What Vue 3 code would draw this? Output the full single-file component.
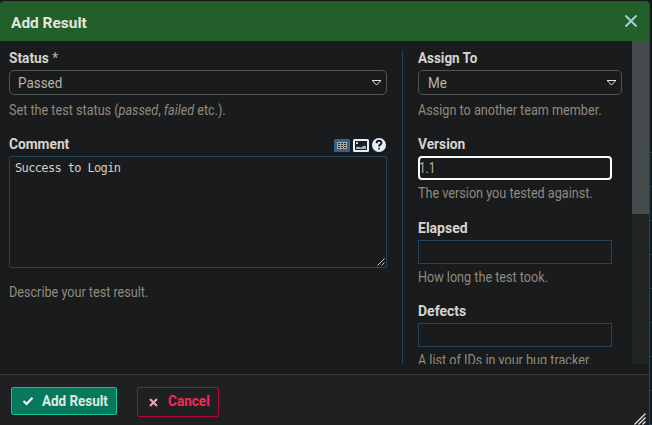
<script setup>
const sideFields = [
  { label: 'Version', value: '1.1', hint: 'The version you tested against.', key: 'version', focused: true },
  { label: 'Elapsed', value: '', hint: 'How long the test took.', key: 'elapsed' },
  { label: 'Defects', value: '', hint: 'A list of IDs in your bug tracker.', key: 'defects' },
]
</script>

<template>
  <div class="page">
    <div class="page-lines"></div>
    <section class="dialog">
      <header class="titlebar">
        <span class="fit title">Add Result</span>
        <svg class="close" width="14" height="14" viewBox="0 0 14 14"><path d="M1.5 1.5 12.5 12.5M12.5 1.5 1.5 12.5" /></svg>
      </header>
      <div class="body">
        <main class="main-col">
          <div class="label"><span class="fit l-status">Status <span class="star">*</span></span></div>
          <div class="select">
            <span class="fit value">Passed</span>
            <svg class="arrow" width="9" height="6" viewBox="0 0 9 6"><path d="M0 .5H9" /><path d="M.6 1 4.5 5 8.4 1" /></svg>
          </div>
          <div class="hint"><span class="fit">Set the test status (<i>passed</i>, <i>failed</i> etc.).</span></div>
          <div class="label comment-row">
            <span class="fit l-comment">Comment</span>
            <div class="tools">
              <svg width="16" height="13" viewBox="0 0 16 13">
                <rect width="16" height="13" rx="1.5" fill="#326489" />
                <rect x="3" y="3" width="10" height="7" fill="#a9aaa8" />
                <path d="M4 4h2v1H4zM7 4h2v1H7zM10 4h2v1h-2zM4 6h2v1H4zM7 6h2v1H7zM10 6h2v1h-2zM4 8h2v1H4zM7 8h2v1H7zM10 8h2v1h-2z" fill="#28292a" />
              </svg>
              <svg width="16" height="13" viewBox="0 0 16 13">
                <rect width="16" height="13" rx="1.5" fill="#e8effc" />
                <rect x="2" y="2" width="12" height="9" fill="#1b2023" />
                <rect x="3" y="3" width="2" height="2" fill="#b4d6b8" />
                <path d="M3 8.5 5 7.5 8 8.5 11 6.5 13 7.5V10H3Z" fill="#92b8d1" />
              </svg>
              <svg width="14" height="14" viewBox="0 0 14 14">
                <circle cx="7" cy="7" r="7" fill="#e8effc" />
                <path d="M4.6 5.2C4.6 1.9 9.6 2.1 9.4 4.9 9.2 6.6 7 6.4 7 8.6" fill="none" stroke="#17191b" stroke-width="2" />
                <rect x="6" y="9.8" width="2" height="1.8" fill="#4c555d" />
              </svg>
            </div>
          </div>
          <div class="textarea">Success to Login
            <svg class="grip" width="8" height="8" viewBox="0 0 8 8"><path d="M.5 7.5 7.5 .5M4.5 7.5 7.5 4.5" /></svg>
          </div>
          <div class="hint after-area"><span class="fit">Describe your test result.</span></div>
        </main>
        <aside class="side-col">
          <div class="label"><span class="fit l-assign">Assign To</span></div>
          <div class="select side-select">
            <span class="fit value">Me</span>
            <svg class="arrow" width="9" height="6" viewBox="0 0 9 6"><path d="M0 .5H9" /><path d="M.6 1 4.5 5 8.4 1" /></svg>
          </div>
          <div class="hint"><span class="fit">Assign to another team member.</span></div>
          <template v-for="f in sideFields" :key="f.key">
            <div class="label"><span class="fit" :class="'l-' + f.key">{{ f.label }}</span></div>
            <div class="input" :class="{ focused: f.focused }"><span class="fit value">{{ f.value }}</span></div>
            <div class="hint input-hint" :class="'h-' + f.key"><span class="fit">{{ f.hint }}</span></div>
          </template>
        </aside>
        <div class="scrollbar"><div class="thumb"></div></div>
      </div>
      <footer class="footer">
        <div class="btn add">
          <svg width="12" height="10" viewBox="0 0 12 10"><path d="M1.5 5 4.5 8 10.5 1.7" /></svg>
          <span class="fit b-add">Add Result</span>
        </div>
        <div class="btn cancel">
          <svg width="9" height="9" viewBox="0 0 9 9"><path d="M1 1 8 8M8 1 1 8" /></svg>
          <span class="fit b-cancel">Cancel</span>
        </div>
        <svg class="resize" width="12" height="12" viewBox="0 0 12 12"><path d="M.5 11.5 11.5 .5M4.5 11.5 11.5 4.5M8.5 11.5 11.5 8.5" /></svg>
      </footer>
    </section>
  </div>
</template>

<style>
body { background: #151719; overflow: hidden; }
</style>

<style scoped>
.page { position: relative; width: 652px; height: 425px; padding-top: 1px; box-sizing: border-box; background: #141617; overflow: hidden; font-family: Roboto, "Liberation Sans", sans-serif; }
.page-lines { position: absolute; right: 0; top: 152px; width: 2px; height: 273px; background: repeating-linear-gradient(#1d3e56 0 1px, #111c23 1px 34px); }
.dialog { position: relative; width: 650px; height: 424px; box-sizing: border-box; border-top: 1px solid #2c4e60; border-right: 1px solid #24445b; border-radius: 4px 4px 0 0; background: #1a1b1c; overflow: hidden; display: flex; flex-direction: column; }
.titlebar { flex: none; height: 39px; box-sizing: border-box; background: #235f2b; display: flex; align-items: center; justify-content: space-between; padding: 2px 11px 0; }
.close { margin: -4px 0 0; fill: none; stroke: #a9cbdc; stroke-width: 2; }
.fit { display: inline-block; white-space: nowrap; transform-origin: left center; }
.title { font-size: 15px; font-weight: 700; color: #e4e6dd; transform: scaleX(1.03); }
.body { flex: none; height: 323px; display: flex; overflow: hidden; }
.main-col { width: 402px; flex: none; box-sizing: border-box; padding: 10px 15px 0 9px; }
.side-col { width: 230px; flex: none; box-sizing: border-box; margin-top: 10px; padding: 0 10px 0 15px; border-left: 1px solid #24445b; height: 313px; overflow: hidden; }
.label { height: 14px; line-height: 14px; margin-bottom: 5px; font-size: 14px; font-weight: 700; color: #d7d4cf; white-space: nowrap; }
.l-status, .l-comment, .l-version { transform: scaleX(.98); }
.l-assign { transform: scaleX(.96); }
.star { font-weight: 400; color: #bab5ad; }
.select { width: 378px; height: 25px; box-sizing: border-box; border: 1px solid #515456; border-radius: 5px; padding: 1px 5px 0 8px; display: flex; align-items: center; justify-content: space-between; }
.side-select { width: 204px; padding-left: 9px; }
.value { font-size: 14px; color: #b9b3aa; transform: scaleX(.96); }
.focused .value { margin-left: -1px; transform: scaleX(.84); }
.arrow { fill: none; stroke: #e6e6e6; stroke-width: 1; }
.hint { height: 16px; line-height: 16px; margin: 7px 0 19px; font-size: 14px; color: #918a7f; white-space: nowrap; }
.hint .fit { transform: scaleX(.902); }
.comment-row { display: flex; justify-content: space-between; }
.tools { display: flex; gap: 3px; align-items: center; margin: 1px 1px 0 0; height: 14px; }
.tools svg { flex: none; }
.textarea { position: relative; width: 378px; height: 112px; box-sizing: border-box; border: 1px solid #24445b; border-radius: 2px; padding: 4px 5px; font: 12px/15px "DejaVu Sans Mono", monospace; letter-spacing: -.64px; color: #d5d1ca; }
.grip { position: absolute; right: 1px; bottom: 1px; fill: none; stroke: #c6c6c6; }
.after-area { margin-top: 16px; }
.input { width: 194px; height: 24px; box-sizing: border-box; border: 1px solid #24445b; display: flex; align-items: center; }
.input.focused { border: 2px solid #fff; border-radius: 4px; }
.input-hint { margin: 5px 0 20px; }
.h-elapsed { margin-bottom: 19px; }
.scrollbar { flex: 1; background: #202424; }
.thumb { height: 173px; background: #464b4d; }
.footer { position: relative; flex: none; margin-top: 10px; height: 51px; box-sizing: border-box; border-top: 1px solid #3a3c3d; background: #1f2021; display: flex; align-items: flex-start; padding: 12px 0 0 11px; gap: 20px; }
.btn { box-sizing: border-box; border-radius: 2px; display: flex; align-items: center; font-size: 14px; font-weight: 700; }
.btn svg { flex: none; fill: none; }
.add { width: 106px; height: 28px; padding-left: 10px; gap: 8px; border: 1px solid #0cc498; background: #07785c; color: #dcebe2; }
.add svg { stroke: #fff; stroke-width: 2; }
.b-add { transform: scaleX(.96); }
.cancel { width: 82px; height: 30px; padding: 0 0 0 11px; gap: 10px; border: 1px solid #b2063a; color: #fc2859; }
.cancel svg { stroke: #f4a2bb; stroke-width: 2; }
.cancel .fit { margin-top: -2px; transform: scaleX(.97); }
.resize { position: absolute; right: 3px; bottom: 0; fill: none; stroke: #f2f2f2; stroke-width: 1.1; }
</style>
